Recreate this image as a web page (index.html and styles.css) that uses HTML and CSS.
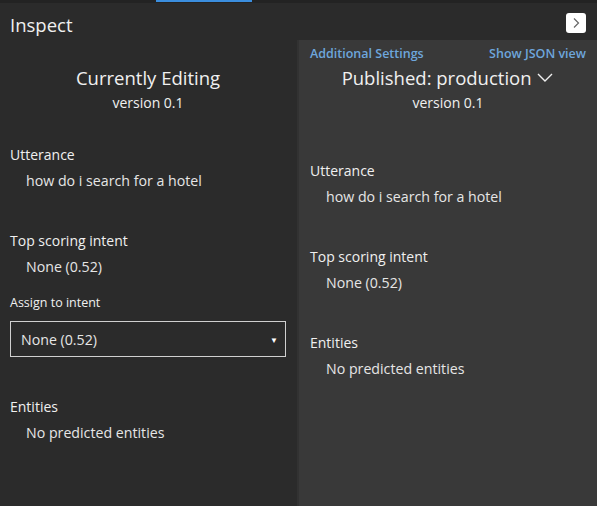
FILE: index.html
```html
<!DOCTYPE html>
<html lang="en">
<head>
    <meta charset="UTF-8">
    <meta name="viewport" content="width=device-width, initial-scale=1.0">
    <title>Inspect</title>
    <link rel="stylesheet" href="styles.css">
</head>
<body>
    <div class="topstrip">
        <div class="tab-active"></div>
    </div>
    <div class="header">
        <h1 class="title">Inspect</h1>
        <button class="close-btn" aria-label="Close">
            <svg width="10" height="12" viewBox="0 0 10 12">
                <path d="M3 1.5 L7.5 6 L3 10.5" fill="none" stroke="#666" stroke-width="1.2"/>
            </svg>
        </button>
    </div>
    <div class="columns">
        <div class="col col-edit">
            <div class="col-head">
                <h2 class="col-title">Currently Editing</h2>
                <div class="version">version 0.1</div>
            </div>
            <div class="section first-edit">
                <div class="label">Utterance</div>
                <div class="value">how do i search for a hotel</div>
            </div>
            <div class="section">
                <div class="label">Top scoring intent</div>
                <div class="value">None (0.52)</div>
            </div>
            <div class="assign">
                <div class="small-label">Assign to intent</div>
                <div class="select">
                    <span>None (0.52)</span>
                    <span class="caret">&#9660;</span>
                </div>
            </div>
            <div class="section">
                <div class="label">Entities</div>
                <div class="value">No predicted entities</div>
            </div>
        </div>
        <div class="col col-pub">
            <div class="links">
                <a href="#">Additional Settings</a>
                <a href="#">Show JSON view</a>
            </div>
            <div class="col-head pub-head">
                <h2 class="col-title">Published: production
                    <svg class="chev" width="18" height="12" viewBox="0 0 18 12">
                        <path d="M2 3 L9 10 L16 3" fill="none" stroke="#f0f0f0" stroke-width="1.4"/>
                    </svg>
                </h2>
                <div class="version">version 0.1</div>
            </div>
            <div class="section first-pub">
                <div class="label">Utterance</div>
                <div class="value">how do i search for a hotel</div>
            </div>
            <div class="section">
                <div class="label">Top scoring intent</div>
                <div class="value">None (0.52)</div>
            </div>
            <div class="section">
                <div class="label">Entities</div>
                <div class="value">No predicted entities</div>
            </div>
        </div>
    </div>
</body>
</html>
```
FILE: styles.css
```css
*{
    padding: 0;
    margin: 0;
    box-sizing: border-box;
}

body{
    width: 597px;
    height: 506px;
    overflow: hidden;
    background-color: #2b2b2b;
    color: #f0f0f0;
    font-family: "Open Sans", "Noto Sans", sans-serif;
    display: flex;
    flex-direction: column;
}

.topstrip{
    height: 3px;
    background-color: #232323;
    position: relative;
}
.tab-active{
    position: absolute;
    left: 156px;
    top: 0;
    width: 96px;
    height: 2px;
    background-color: #3b8ede;
}

.header{
    height: 37px;
    display: flex;
    align-items: center;
    justify-content: space-between;
    padding: 0 11px 0 10px;
}
.title{
    font-size: 18.5px;
    font-weight: 400;
    line-height: 24px;
    margin-top: 7px;
}
.close-btn{
    width: 20px;
    height: 20px;
    border: none;
    border-radius: 3px;
    background-color: #fff;
    display: flex;
    align-items: center;
    justify-content: center;
    margin-top: 2px;
}

.columns{
    flex: 1;
    display: grid;
    grid-template-columns: 297px 1fr;
}
.col{
    padding: 0 11px 0 10px;
}
.col-edit{
    padding-top: 25px;
}
.col-pub{
    background-color: #393939;
    border-left: 2px solid #323232;
    padding: 6px 11px 0 11px;
}

.col-head{
    text-align: center;
}
.col-title{
    font-size: 18.5px;
    font-weight: 400;
    line-height: 26px;
}
.chev{
    vertical-align: 2px;
    margin-left: 0;
}
.version{
    font-size: 14px;
    line-height: 20px;
    margin-top: 2px;
}
.pub-head{
    margin-top: 3px;
}

.links{
    display: flex;
    justify-content: space-between;
    line-height: 16px;
}
.links a{
    color: #6ea6dc;
    font-size: 12.5px;
    font-weight: 600;
    text-decoration: none;
}

.section{
    margin-top: 40px;
}
.section.first-edit{
    margin-top: 32px;
}
.section.first-pub{
    margin-top: 48px;
}
.label{
    font-size: 14px;
    line-height: 20px;
}
.value{
    font-size: 14.2px;
    line-height: 20px;
    margin-top: 6px;
    padding-left: 16px;
    color: #e6e6e6;
}

.assign{
    margin-top: 17px;
}
.small-label{
    font-size: 12.5px;
    line-height: 18px;
}
.select{
    margin-top: 9px;
    height: 36px;
    border: 1px solid #d0d0d0;
    display: flex;
    align-items: center;
    justify-content: space-between;
    padding: 0 7px 0 10px;
    font-size: 14.2px;
    color: #e6e6e6;
}
.caret{
    font-size: 8px;
    color: #fff;
}
```
